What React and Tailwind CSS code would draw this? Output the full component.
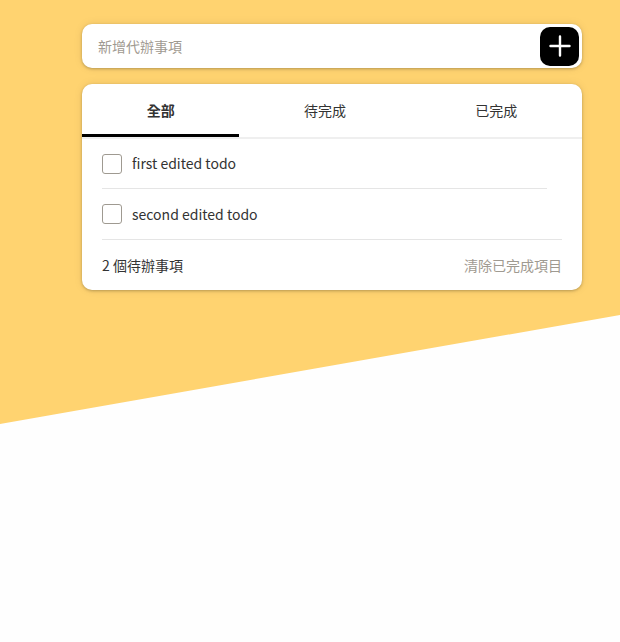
import React, { useState } from "react";

const todos = [
  { id: 1, text: "first edited todo", done: false },
  { id: 2, text: "second edited todo", done: false },
];

const tabs = ["全部", "待完成", "已完成"];

const App = () => {
  const [active, setActive] = useState(0);

  return (
    <div className="relative min-h-[642px] bg-[#fefefe] font-['Noto_Sans_CJK_TC','Noto_Sans',sans-serif] text-[#333333]">
      {/* yellow slanted backdrop */}
      <div className="absolute inset-x-0 top-0 h-[424px] bg-[#ffd370] [clip-path:polygon(0_0,100%_0,100%_315px,0_100%)]" />

      <div className="relative ml-[82px] w-[500px] pt-[24px]">
        <div className="flex h-[44px] items-center justify-between rounded-[10px] bg-white pl-4 pr-[3px] shadow-[0_1px_3px_rgba(0,0,0,0.25),0_0_10px_rgba(0,0,0,0.08)]">
          <span className="text-[14px] text-[#9f9a91]">新增代辦事項</span>
          <button className="flex h-[39px] w-[39px] items-center justify-center rounded-[10px] bg-black">
            <svg width="22" height="22" viewBox="0 0 22 22" fill="none" stroke="white" strokeWidth="2.4" strokeLinecap="round">
              <path d="M11 1.5v19M1.5 11h19" />
            </svg>
          </button>
        </div>

        <div className="mt-[16px] overflow-hidden rounded-[10px] bg-white shadow-[0_1px_3px_rgba(0,0,0,0.25),0_0_10px_rgba(0,0,0,0.08)]">
          <div className="flex border-b-2 border-[#efefef]">
            {tabs.map((t, i) => (
              <button
                key={t}
                onClick={() => setActive(i)}
                className={
                  i === active
                    ? "flex h-[53px] flex-auto items-center justify-center border-b-[3px] border-black pt-[3px] text-[14px] font-bold text-[#333333]"
                    : "flex h-[53px] flex-auto items-center justify-center border-b-[3px] border-transparent pt-[3px] text-[14px] text-[#333333]"
                }
              >
                {t}
              </button>
            ))}
          </div>

          <div className="px-5">
            {todos.map((todo, i) => (
              <div
                key={todo.id}
                className={
                  i < todos.length - 1
                    ? "mr-[15px] flex h-[50px] items-center gap-[10px] border-b border-[#e5e5e5]"
                    : "flex h-[50px] items-center gap-[10px]"
                }
              >
                <span className="h-[20px] w-[20px] rounded-[3px] border border-[#9f9a91]" />
                <span className="text-[14px]">{todo.text}</span>
              </div>
            ))}
            <div className="flex h-[51px] items-center justify-between border-t border-[#e5e5e5] text-[14px]">
              <span>{todos.length} 個待辦事項</span>
              <span className="text-[#9f9a91]">清除已完成項目</span>
            </div>
          </div>
        </div>
      </div>
    </div>
  );
};

export default App;
